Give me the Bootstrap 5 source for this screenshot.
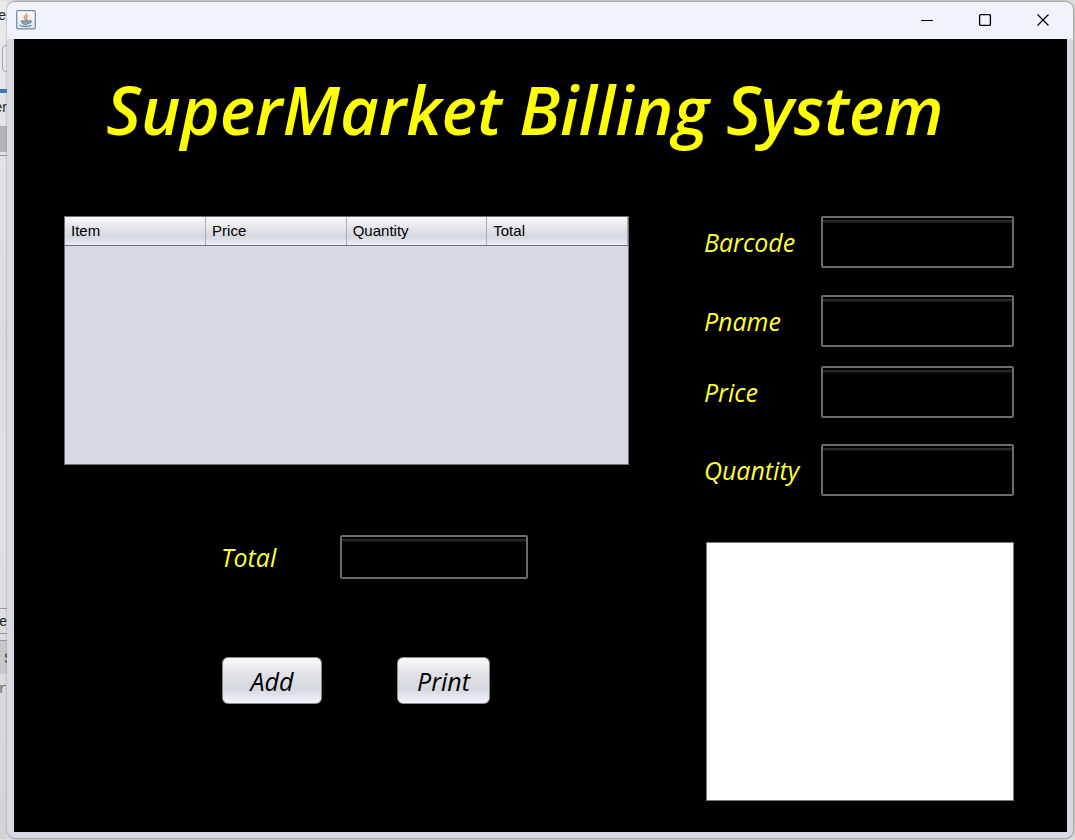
<!DOCTYPE html>
<html lang="en">
<head>
<meta charset="utf-8">
<meta name="viewport" content="width=device-width, initial-scale=1">
<title>SuperMarket Billing System</title>
<link href="https://cdn.jsdelivr.net/npm/bootstrap@5.3.0/dist/css/bootstrap.min.css" rel="stylesheet">
<style>
  :root { --chrome: #d6d9e2; --ink: "Open Sans", "Noto Sans", sans-serif; }
  body { background: #dedede; font-family: "Liberation Sans", Arial, sans-serif; padding: 1px 1px 1px 0; }

  /* sliver of the editor behind the window */
  .behind { width: 7px; font-size: 14px; line-height: 20px; color: #222; background: linear-gradient(#e9e9e9, #dcdcdc 40%, #e2e2e2 60%, #d2d2d2); }
  .behind span { display: flex; justify-content: flex-end; height: 20px; }
  .behind .first { margin: 4px 1px 0 0; }
  .behind .stub { width: 12px; height: 27px; margin: 20px 0 17px 2px; border: 1px solid #aaa; border-radius: 4px; flex: none; }
  .behind .stripe { height: 4px; background: #3b78b5; }
  .behind .second { margin-top: 4px; }
  .behind .block { height: 26px; margin-top: 9px; background: #b3b3b3; }
  .behind .rule { border-top: 1px solid #999; margin-top: 3px; }
  .behind .foot { margin-bottom: 140px; }
  .behind .edge { border-top: 1px solid #999; border-bottom: 1px solid #999; height: 26px; align-items: center; }
  .behind .tint { background: #c8c8c8; height: 34px; border-top: 1px solid #999; margin-top: 6px; align-items: center; justify-content: flex-start; padding-left: 4px; }
  .behind .mono { font-family: "Liberation Mono", monospace; color: #666; margin-top: 5px; }

  .app-window { background: var(--chrome); border: 1px solid #a9a9a9; border-width: 1px 1px 1px 0; border-radius: 9px; box-shadow: 0 0 2px #888; min-width: 0; padding: 0 6px 6px 7px; }
  .title-bar { background: #f0f3fb; height: 37px; margin: 0 -6px 0 -7px; padding: 0 15px 2px 9px; border-radius: 8px 8px 0 0; }
  .win-btn { width: 30px; height: 30px; padding: 0; border: 0; background: none; line-height: 0; }
  .win-btns { gap: 28px; }

  .panel { background: #000; padding: 0 53px 30px 50px; }
  .headline { font: italic 600 67px/72px var(--ink); color: #ff0; margin: 0 28px 71px 0; padding-top: 34px; }
  .columns { display: grid; grid-template-columns: minmax(0, 565fr) minmax(0, 310fr); column-gap: 75px; }

  .bill { height: 249px; background: #d6d9e2; border: 1px solid #6a6f78; }
  .bill table { width: 100%; table-layout: fixed; font-size: 15px; line-height: 18px; color: #000; }
  .bill th { font-weight: 400; height: 28px; padding: 1px 6px 0; border-right: 1px solid #a9adb6; border-bottom: 1px solid #6b727d; background: linear-gradient(#fafafb, #e3e4e8 40%, #d5d8df 70%, #e8ecf5); }

  .caption { font: italic 500 25px/28px var(--ink); color: #ff3; }
  .field { height: 52px; min-width: 0; flex: 1; color: #fff; background: linear-gradient(transparent 2px, #333 2px, #111 5px, transparent 5px) #000; border: 2px solid #6c6c6c; border-radius: 2px; padding: 4px 8px; }
  .fields { gap: 27px; }
  .fields .caption { width: 117px; }
  .fields .close-up { margin: -8px 0 -1px; }
  .receipt { width: calc(100% - 2px); height: 259px; margin: 46px 0 0 2px; border: 1px solid #777b86; background: #fff; resize: none; display: block; }

  .total-row { margin: 70px 0 0 157px; }
  .total-row .caption { width: 119px; }
  .total-row .field { flex: none; width: 188px; height: 44px; }
  .actions { margin: 78px 0 0 158px; gap: 75px; }
  .push { height: 47px; width: 100px; font: italic 500 25px/28px var(--ink); color: #000; border: 1px solid #858891; border-radius: 6px; background: linear-gradient(#fafafb, #e3e4e8 30%, #d5d8df 70%, #f3f5fb); padding: 0; }
  .push-short { width: 93px; }
</style>
</head>
<body class="d-flex min-vh-100">
  <aside class="behind d-flex flex-column overflow-hidden flex-shrink-0" aria-hidden="true">
    <span class="first">e</span>
    <div class="stub"></div>
    <div class="stripe"></div>
    <span class="second">er</span>
    <div class="block"></div>
    <div class="rule"></div>
    <div class="flex-fill"></div>
    <span class="edge">e</span>
    <span class="tint">S</span>
    <span class="mono foot">r</span>
  </aside>

  <div class="app-window d-flex flex-column flex-fill">
    <header class="title-bar d-flex align-items-center justify-content-between">
      <svg width="20" height="20" viewBox="0 0 20 20" aria-hidden="true">
        <defs><linearGradient id="tile" x2="0" y2="1"><stop stop-color="#fff"/><stop offset="1" stop-color="#dfe4ea"/></linearGradient></defs>
        <rect x=".7" y=".7" width="18.6" height="18.2" rx="1.5" fill="url(#tile)" stroke="#7088a0" stroke-width="1.2"/>
        <path d="M10.8 3c.8 2-3.3 3-2.6 4.800.3.900 1.300 1.500 1.300 2.200M12.500 5.500c-2.300 1-2.700 2-1.800 3 .4.700 0 1.200-.4 1.600" fill="none" stroke="#e8883a" stroke-width="1.200"/>
        <path d="M5.500 10.800h7.800c-.3 2-1 3.200-2 3.500H7.500c-1-.4-1.800-1.500-2-3.500z" fill="#8ba4b8" stroke="#58788f" stroke-width=".8"/>
        <path d="M13.300 10.800c3-.5 2.500 2.300-.8 2.500M4 14.800c-.5 2 10 2 11.300.3" fill="none" stroke="#58788f" stroke-width="1.100"/>
      </svg>
      <div class="win-btns d-flex">
        <button class="win-btn" type="button" aria-label="Minimize"><svg width="14" height="14"><path d="M1 7.500h12" stroke="#000"/></svg></button>
        <button class="win-btn" type="button" aria-label="Maximize"><svg width="14" height="14"><rect x="1.600" y="1.600" width="10.800" height="10.800" rx="1" fill="none" stroke="#000" stroke-width="1.300"/></svg></button>
        <button class="win-btn" type="button" aria-label="Close"><svg width="14" height="14"><path d="M1.500 1.500l11 11m0-11l-11 11" stroke="#000" stroke-width="1.200"/></svg></button>
      </div>
    </header>

    <main class="panel flex-fill">
      <h1 class="headline text-center">SuperMarket Billing System</h1>
      <form class="columns">
        <section>
          <div class="bill">
            <table>
              <thead><tr><th scope="col">Item</th><th scope="col">Price</th><th scope="col">Quantity</th><th scope="col">Total</th></tr></thead>
              <tbody></tbody>
            </table>
          </div>
          <div class="total-row d-flex align-items-center">
            <label class="caption" for="total">Total</label>
            <input class="field" id="total" type="text">
          </div>
          <div class="actions d-flex">
            <button class="push" type="button">Add</button>
            <button class="push push-short" type="button">Print</button>
          </div>
        </section>
        <section>
          <div class="fields d-flex flex-column">
            <div class="d-flex align-items-center"><label class="caption" for="barcode">Barcode</label><input class="field" id="barcode" type="text"></div>
            <div class="d-flex align-items-center"><label class="caption" for="pname">Pname</label><input class="field" id="pname" type="text"></div>
            <div class="close-up d-flex align-items-center"><label class="caption" for="price">Price</label><input class="field" id="price" type="text"></div>
            <div class="d-flex align-items-center"><label class="caption" for="quantity">Quantity</label><input class="field" id="quantity" type="text"></div>
          </div>
          <textarea class="receipt" aria-label="Receipt"></textarea>
        </section>
      </form>
    </main>
  </div>
<script src="https://cdn.jsdelivr.net/npm/bootstrap@5.3.0/dist/js/bootstrap.bundle.min.js"></script>
</body>
</html>
